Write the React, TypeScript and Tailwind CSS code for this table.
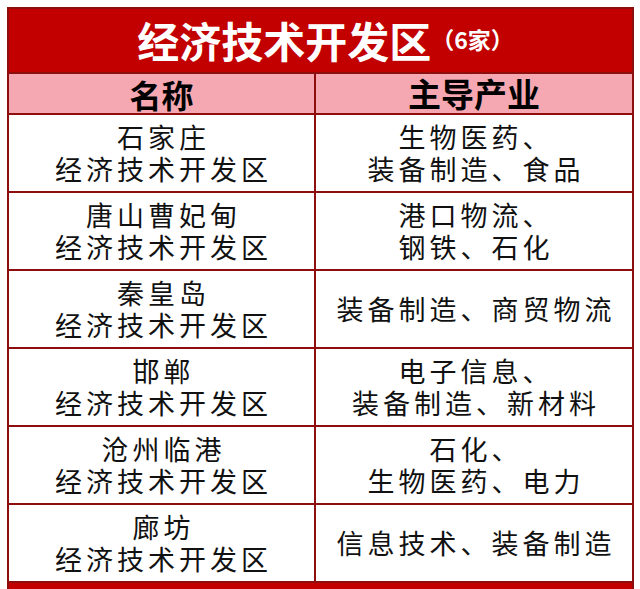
import { Fragment } from 'react'

const ROWS: { name: string[]; industry: string[] }[] = [
  { name: ['石家庄', '经济技术开发区'], industry: ['生物医药、', '装备制造、食品'] },
  { name: ['唐山曹妃甸', '经济技术开发区'], industry: ['港口物流、', '钢铁、石化'] },
  { name: ['秦皇岛', '经济技术开发区'], industry: ['装备制造、商贸物流'] },
  { name: ['邯郸', '经济技术开发区'], industry: ['电子信息、', '装备制造、新材料'] },
  { name: ['沧州临港', '经济技术开发区'], industry: ['石化、', '生物医药、电力'] },
  { name: ['廊坊', '经济技术开发区'], industry: ['信息技术、装备制造'] },
]

function Cell({ lines }: { lines: string[] }) {
  return (
    <div className="flex items-center justify-center h-full">
      <p className="text-center text-[27px] leading-[32px] tracking-[4px] pl-[4px] text-[#111]">
        {lines.map((l, i) => (
          <Fragment key={l}>
            {i > 0 && <br />}
            {l}
          </Fragment>
        ))}
      </p>
    </div>
  )
}

export default function App() {
  return (
    <div
      className="bg-white w-[640px] h-[589px] overflow-hidden pt-[7px] pl-[7px] pr-[6px]"
      style={{ fontFamily: '"Noto Sans CJK SC", "Noto Sans", sans-serif' }}
    >
      <div className="border-x-2 border-t-2 border-[#8e0d0d]">
        {/* Title band */}
        <div className="h-[63px] bg-[#c20000] flex items-center justify-center pl-[10px] pb-[2px]">
          <span className="text-[42px] font-bold text-white leading-none">经济技术开发区</span>
          <span className="text-[23px] font-bold text-white leading-none">（6家）</span>
        </div>

        {/* Header row */}
        <div className="grid grid-cols-[307px_1fr] border-t-2 border-[#8e0d0d] bg-[#f5a8b2] h-[41px]">
          <div className="flex items-center justify-center border-r-2 border-[#8e0d0d]">
            <span className="text-[32px] font-bold text-black leading-none">名称</span>
          </div>
          <div className="flex items-center justify-center">
            <span className="text-[33px] font-bold text-black leading-none">主导产业</span>
          </div>
        </div>

        {/* Body rows */}
        {ROWS.map((row) => (
          <div key={row.name[0]} className="grid grid-cols-[307px_1fr] border-t-2 border-[#8e0d0d] h-[78px]">
            <div className="border-r-2 border-[#8e0d0d]">
              <Cell lines={row.name} />
            </div>
            <Cell lines={row.industry} />
          </div>
        ))}

        {/* Bottom edge */}
        <div className="border-t-2 border-[#8e0d0d] h-[10px] bg-[#c20000]" />
      </div>
    </div>
  )
}
